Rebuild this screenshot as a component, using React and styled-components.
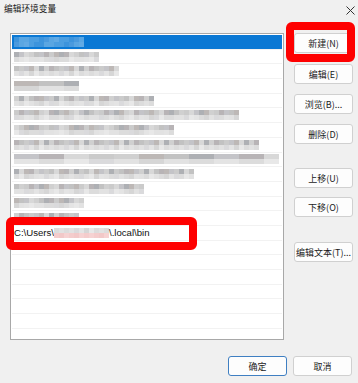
import React from 'react';
import styled, { createGlobalStyle } from 'styled-components';

const Global = createGlobalStyle`
  html, body { margin: 0; padding: 0; background: #f0f0f0; }
  * { box-sizing: border-box; }
`;

const Window = styled.div`
  width: 358px;
  height: 383px;
  background: #f0f0f0;
  position: relative;
  overflow: hidden;
  font-family: "Noto Sans CJK SC", "Liberation Sans", sans-serif;
  color: #1a1a1a;
`;

const TitleBar = styled.div`
  height: 33px;
  display: flex;
  justify-content: space-between;
  padding: 2px 2px 0 4px;
  > span {
    font-size: 8.7px;
    line-height: 13px;
  }
`;

const Close = styled.svg`
  margin-top: 4px;
  margin-right: 1px;
`;

const Body = styled.div`
  display: flex;
  padding-left: 10px;
  gap: 10px;
`;

const ListBox = styled.div`
  width: 274px;
  height: 307px;
  border: 1px solid #a8a8a8;
  background: #fff;
  padding: 1px 1px 0 1px;
  overflow: hidden;
`;

const Row = styled.div`
  height: 14.7px;
  display: flex;
  align-items: center;
  padding-left: 2px;
  border-bottom: 1px solid #f2f2f2;
  background: ${p => (p.selected ? '#0a78d4' : '#fff')};
  box-shadow: ${p => (p.selected ? '0 4px 0 #c4dcee' : 'none')};
  position: relative;
  font-family: "Liberation Sans", "Noto Sans CJK SC", sans-serif;
  font-size: 9.6px;
  color: #111;
`;

const Mosaic = styled.div`
  display: grid;
  grid-template-columns: repeat(${p => p.cols}, 5px);
  grid-auto-rows: 5px;
`;

const Cell = styled.span`
  background: ${p => p.c};
`;

const grays = ['#cbcbcb', '#c2c2c2', '#b8b4b6', '#d0d0d0', '#aeb0b4', '#d8d8d8', '#bdb8b6', '#c4c4c8'];
const lights = ['#e2e2e2', '#dcdcdc', '#e8e8e8', '#d6d6d6', '#e4e4e4', '#dadadc'];
const blues = ['#4c9ee0', '#5aa6e2', '#3d94dc', '#62aae4', '#4a9ade'];
const pinks = ['#f4cccc', '#f6d2d2', '#f2c8c8'];

const Blur = ({ width, seed, tone }) => {
  const cols = Math.round(width / 5);
  const cells = [];
  for (let r = 0; r < 2; r++) {
    for (let i = 0; i < cols; i++) {
      const n = (i * 7 + seed * 13 + r * 5 + ((i * seed) % 5)) % 8;
      let c;
      if (tone === 'blue') c = blues[n % blues.length];
      else if (tone === 'pink') c = r === 0 ? lights[n % lights.length] : pinks[n % pinks.length];
      else c = r === 0 ? grays[n] : lights[n % lights.length];
      cells.push(<Cell key={r + '-' + i} c={c} />);
    }
  }
  return <Mosaic cols={cols}>{cells}</Mosaic>;
};

const Buttons = styled.div`
  display: flex;
  flex-direction: column;
  width: 59px;
`;

const Btn = styled.div`
  height: 20px;
  width: 59px;
  background: #fdfdfd;
  border: 1px solid ${p => (p.primary ? '#3f7fc2' : '#d0d0d0')};
  border-radius: 3px;
  display: flex;
  align-items: center;
  justify-content: center;
  font-size: 9px;
  color: #1a1a1a;
  margin-top: ${p => p.gap || 0}px;
`;

const Footer = styled.div`
  display: flex;
  justify-content: flex-end;
  gap: 6px;
  padding: 16px 6px 0 0;
`;

const Highlight = styled.div`
  position: absolute;
  border: 8px solid #fe0000;
  border-radius: 6px;
  pointer-events: none;
`;

const widths = [72, 86, 106, 66, 140, 226, 160, 246, 266, 180, 130, 70, 66];

export default function App() {
  const rows = [];
  for (let i = 0; i < 21; i++) {
    if (i < 13) {
      rows.push(
        <Row key={i} selected={i === 0}>
          <Blur width={widths[i]} seed={i + 3} tone={i === 0 ? 'blue' : 'gray'} />
        </Row>
      );
    } else if (i === 13) {
      rows.push(
        <Row key={i}>
          <span>C:\Users\</span>
          <Blur width={55} seed={5} tone="pink" />
          <span>\.local\bin</span>
        </Row>
      );
    } else {
      rows.push(<Row key={i} />);
    }
  }

  return (
    <Window>
      <Global />
      <TitleBar>
        <span>编辑环境变量</span>
        <Close width="9" height="9" viewBox="0 0 9 9">
          <path d="M0.5 0.5 L8.5 8.5 M8.5 0.5 L0.5 8.5" stroke="#333" strokeWidth="1" />
        </Close>
      </TitleBar>
      <Body>
        <ListBox>{rows}</ListBox>
        <Buttons>
          <Btn>新建(N)</Btn>
          <Btn gap={11}>编辑(E)</Btn>
          <Btn gap={10}>浏览(B)...</Btn>
          <Btn gap={10}>删除(D)</Btn>
          <Btn gap={24}>上移(U)</Btn>
          <Btn gap={9}>下移(O)</Btn>
          <Btn gap={25}>编辑文本(T)...</Btn>
        </Buttons>
      </Body>
      <Footer>
        <Btn primary>确定</Btn>
        <Btn>取消</Btn>
      </Footer>
      <Highlight style={{ left: 286, top: 22, width: 69, height: 40 }} />
      <Highlight style={{ left: 6, top: 217, width: 191, height: 33 }} />
    </Window>
  );
}
